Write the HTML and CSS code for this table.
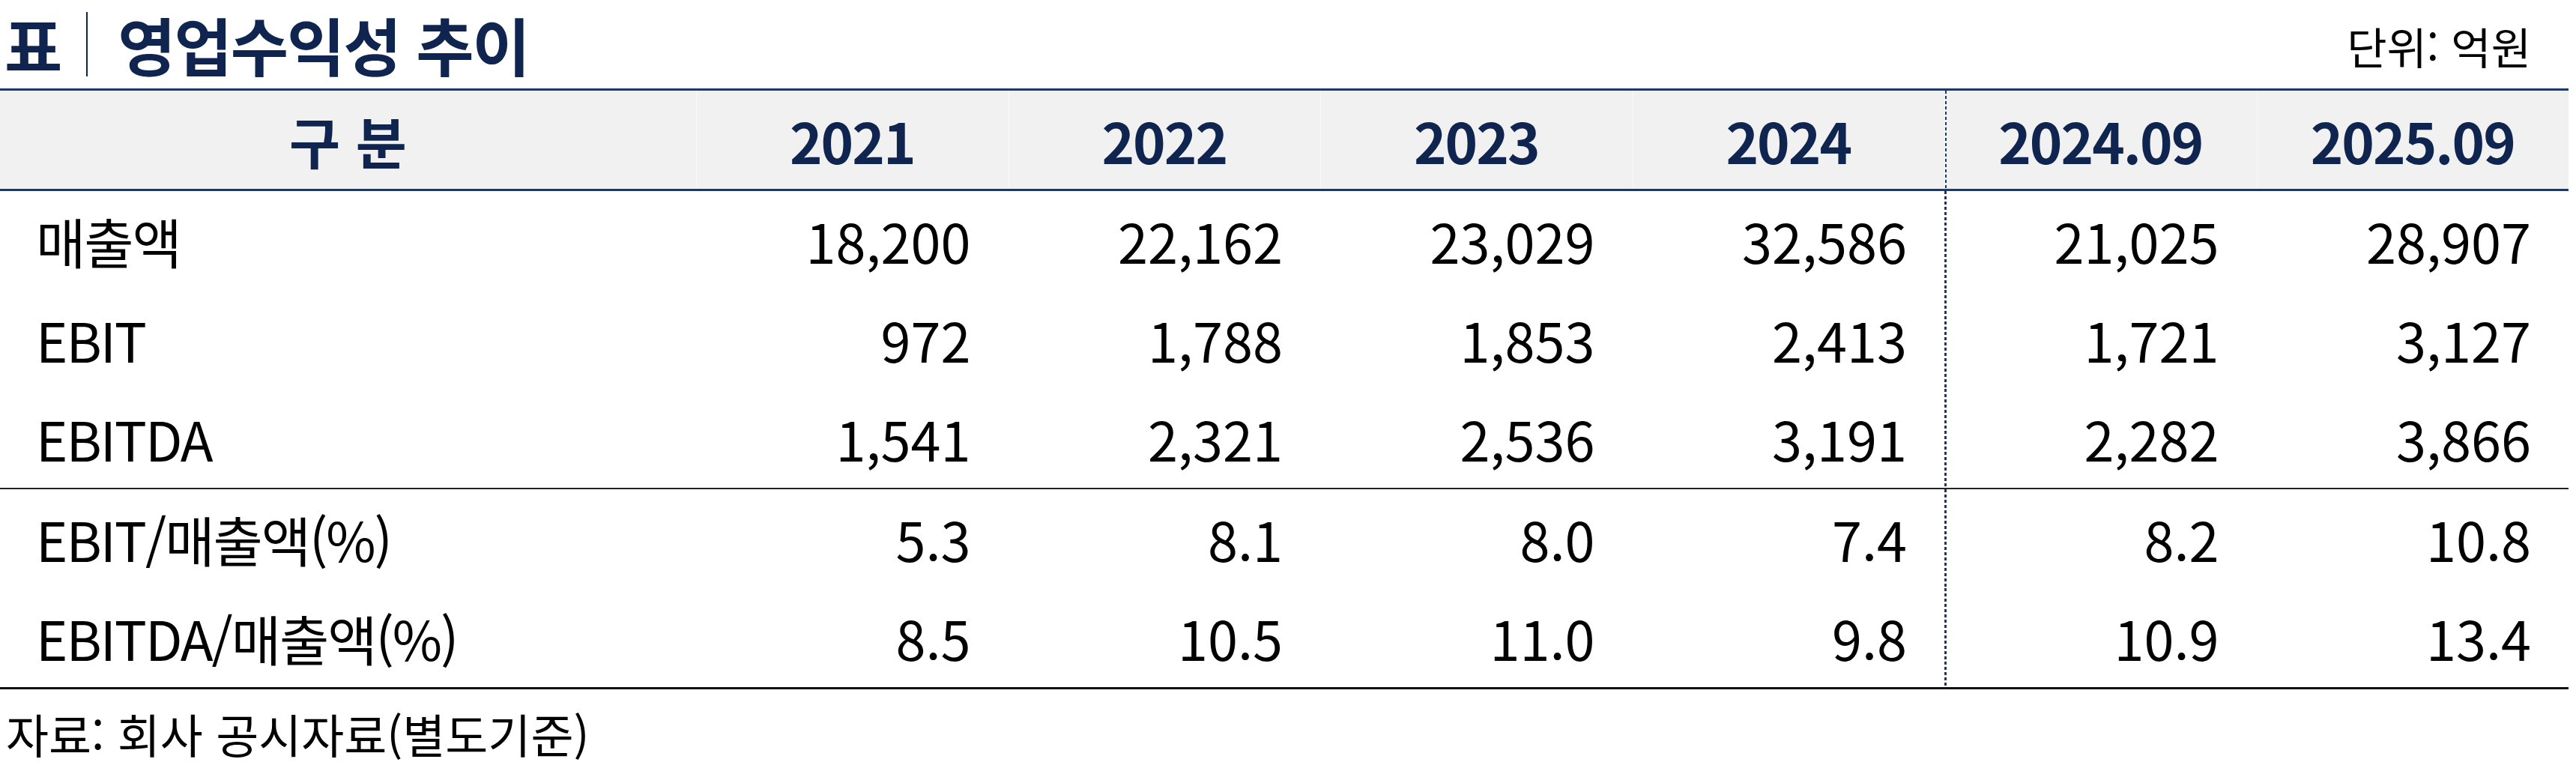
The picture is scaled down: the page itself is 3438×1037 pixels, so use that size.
FILE: index.html
```html
<!DOCTYPE html>
<html lang="ko">
<head>
<meta charset="utf-8">
<title>영업수익성 추이</title>
<link rel="stylesheet" href="styles.css">
</head>
<body>
<div class="page">
  <div class="title-bar">
    <div class="title">
      <span class="title-tag">표</span>
      <span class="title-sep"></span>
      <span class="title-text">영업수익성 추이</span>
    </div>
    <div class="unit">단위: 억원</div>
  </div>

  <div class="table">
    <div class="row head">
      <div class="cell label">구 분</div>
      <div class="cell">2021</div>
      <div class="cell">2022</div>
      <div class="cell">2023</div>
      <div class="cell">2024</div>
      <div class="cell split">2024.09</div>
      <div class="cell">2025.09</div>
    </div>
    <div class="group">
      <div class="row">
        <div class="cell label">매출액</div>
        <div class="cell">18,200</div>
        <div class="cell">22,162</div>
        <div class="cell">23,029</div>
        <div class="cell">32,586</div>
        <div class="cell split">21,025</div>
        <div class="cell">28,907</div>
      </div>
      <div class="row">
        <div class="cell label">EBIT</div>
        <div class="cell">972</div>
        <div class="cell">1,788</div>
        <div class="cell">1,853</div>
        <div class="cell">2,413</div>
        <div class="cell split">1,721</div>
        <div class="cell">3,127</div>
      </div>
      <div class="row">
        <div class="cell label">EBITDA</div>
        <div class="cell">1,541</div>
        <div class="cell">2,321</div>
        <div class="cell">2,536</div>
        <div class="cell">3,191</div>
        <div class="cell split">2,282</div>
        <div class="cell">3,866</div>
      </div>
    </div>
    <div class="group last">
      <div class="row">
        <div class="cell label">EBIT/매출액(%)</div>
        <div class="cell">5.3</div>
        <div class="cell">8.1</div>
        <div class="cell">8.0</div>
        <div class="cell">7.4</div>
        <div class="cell split">8.2</div>
        <div class="cell">10.8</div>
      </div>
      <div class="row">
        <div class="cell label">EBITDA/매출액(%)</div>
        <div class="cell">8.5</div>
        <div class="cell">10.5</div>
        <div class="cell">11.0</div>
        <div class="cell">9.8</div>
        <div class="cell split">10.9</div>
        <div class="cell">13.4</div>
      </div>
    </div>
  </div>

  <div class="source">자료: 회사 공시자료(별도기준)</div>
</div>
</body>
</html>
```

FILE: styles.css
```css
html, body {
  margin: 0;
  padding: 0;
  background: #ffffff;
}

body {
  font-family: "Noto Sans CJK KR", "Noto Sans", sans-serif;
  color: #000000;
}

.page {
  width: 3428px;
}

.title-bar {
  height: 118px;
  display: flex;
  justify-content: space-between;
  align-items: center;
  padding: 0 50px 0 6px;
}

.title {
  display: flex;
  align-items: center;
  color: #0f2550;
  font-weight: 700;
  font-size: 84px;
  line-height: 1;
}

.title-sep {
  width: 2px;
  height: 86px;
  background: #0f2550;
  margin: 0 40px 0 32px;
}

.title-text {
  letter-spacing: -2px;
}

.unit {
  font-size: 58px;
  line-height: 1;
  color: #000000;
  margin-top: 4px;
}

.table {
  border-top: 3px solid #1f3864;
  border-bottom: 3px solid #111111;
}

.row {
  display: grid;
  grid-template-columns: 929px repeat(6, 416.5px);
  height: 132px;
}

.head {
  height: 131px;
  background: #f1f1f1;
  border-bottom: 3px solid #1f3864;
  color: #0f2550;
  font-weight: 700;
}

.group + .group {
  border-top: 2px solid #222222;
}

.cell {
  display: flex;
  align-items: center;
  justify-content: flex-end;
  padding-right: 50px;
  font-size: 72px;
  line-height: 1;
}

.head .cell {
  justify-content: center;
  padding-right: 0;
  font-size: 74px;
  letter-spacing: -2px;
}

.head .cell + .cell {
  box-shadow: inset 1px 0 0 #f8f8f8;
}

.cell.label {
  justify-content: flex-start;
  padding-left: 48px;
  padding-right: 0;
  letter-spacing: -2px;
}

.head .cell.label {
  justify-content: center;
  padding-left: 0;
  letter-spacing: 0;
}

.cell.split {
  background-image: linear-gradient(#1f3864 55%, transparent 55%);
  background-size: 3px 7px;
  background-repeat: repeat-y;
  background-position: left top;
}

.source {
  height: 118px;
  display: flex;
  align-items: center;
  padding-left: 8px;
  font-size: 62px;
  line-height: 1;
}
```
